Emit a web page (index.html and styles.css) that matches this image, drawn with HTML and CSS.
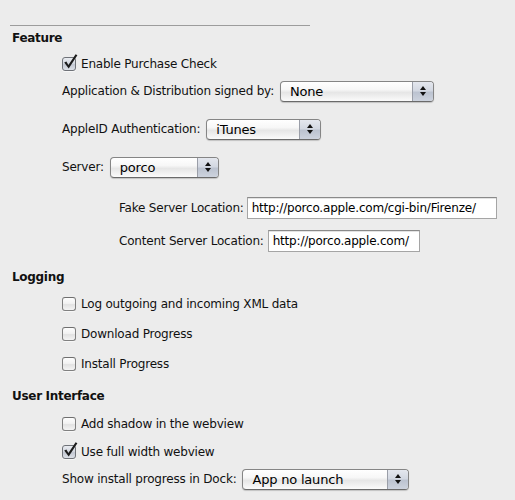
FILE: index.html
```html
<!DOCTYPE html>
<html>
<head>
<meta charset="utf-8">
<link rel="stylesheet" href="styles.css">
</head>
<body>
<div class="pane">
  <div class="rule"></div>

  <div class="row head r-feature">Feature</div>

  <div class="row ind r-enable">
    <span class="box on"><svg class="tick" viewBox="0 0 18 18" width="18" height="18"><path d="M3.2 9.6 L5.4 8.4 L7.4 12 L14.6 1.2 L16.4 2.2 L7.7 15.6 Z"/></svg></span>
    <span class="ctext">Enable Purchase Check</span>
  </div>

  <div class="row ind r-sign">
    <span class="lbl">Application &amp; Distribution signed by:</span>
    <span class="popup w-sign"><span class="ptext">None</span><span class="step"><i class="up"></i><i class="dn"></i></span></span>
  </div>

  <div class="row ind r-apple">
    <span class="lbl">AppleID Authentication:</span>
    <span class="popup w-apple"><span class="ptext">iTunes</span><span class="step"><i class="up"></i><i class="dn"></i></span></span>
  </div>

  <div class="row ind r-server">
    <span class="lbl">Server:</span>
    <span class="popup w-server"><span class="ptext">porco</span><span class="step"><i class="up"></i><i class="dn"></i></span></span>
  </div>

  <div class="row ind2 r-fake">
    <span class="lbl">Fake Server Location:</span>
    <span class="field w-fake">http://porco.apple.com/cgi-bin/Firenze/</span>
  </div>

  <div class="row ind2 r-content">
    <span class="lbl">Content Server Location:</span>
    <span class="field w-content">http://porco.apple.com/</span>
  </div>

  <div class="row head r-logging">Logging</div>

  <div class="row ind r-log">
    <span class="box"></span>
    <span class="ctext">Log outgoing and incoming XML data</span>
  </div>

  <div class="row ind r-dl">
    <span class="box"></span>
    <span class="ctext">Download Progress</span>
  </div>

  <div class="row ind r-inst">
    <span class="box"></span>
    <span class="ctext">Install Progress</span>
  </div>

  <div class="row head r-ui">User Interface</div>

  <div class="row ind r-shadow">
    <span class="box"></span>
    <span class="ctext">Add shadow in the webview</span>
  </div>

  <div class="row ind r-full">
    <span class="box on"><svg class="tick" viewBox="0 0 18 18" width="18" height="18"><path d="M3.2 9.6 L5.4 8.4 L7.4 12 L14.6 1.2 L16.4 2.2 L7.7 15.6 Z"/></svg></span>
    <span class="ctext">Use full width webview</span>
  </div>

  <div class="row ind r-dock">
    <span class="lbl">Show install progress in Dock:</span>
    <span class="popup w-dock"><span class="ptext">App no launch</span><span class="step"><i class="up"></i><i class="dn"></i></span></span>
  </div>
</div>
</body>
</html>
```

FILE: styles.css
```css
html, body {
  margin: 0;
  padding: 0;
  background: #ececec;
}
body {
  width: 515px;
  height: 500px;
  overflow: hidden;
  font-family: "DejaVu Sans", "Liberation Sans", sans-serif;
  font-size: 12px;
  letter-spacing: -0.2px;
  color: #111;
}
.pane {
  display: flex;
  flex-direction: column;
  padding-top: 25px;
}
.rule {
  margin-left: 10px;
  width: 300px;
  height: 1px;
  background: #9c9c9c;
}
.row {
  display: flex;
  align-items: center;
  height: 22px;
  white-space: nowrap;
}
.head {
  padding-left: 12px;
  font-weight: bold;
  letter-spacing: -0.3px;
}
.ind { padding-left: 62px; }
.ind2 { padding-left: 119px; }

.r-feature { margin-top: 1px; }
.r-enable { margin-top: 4px; }
.r-sign { margin-top: 5px; }
.r-apple { margin-top: 16px; }
.r-server { margin-top: 16px; }
.r-fake { margin-top: 19px; }
.r-content { margin-top: 11px; }
.r-logging { margin-top: 14px; }
.r-log { margin-top: 5px; }
.r-dl { margin-top: 8px; }
.r-inst { margin-top: 8px; }
.r-ui { margin-top: 10px; }
.r-shadow { margin-top: 6px; }
.r-full { margin-top: 6px; }
.r-dock { margin-top: 5px; }

/* checkbox */
.box {
  position: relative;
  flex: none;
  box-sizing: border-box;
  width: 14px;
  height: 14px;
  border: 1px solid #808080;
  border-top-color: #6e6e6e;
  border-radius: 3px;
  background: linear-gradient(#fdfdfd, #f2f2f2 45%, #e2e2e2 55%, #f4f4f4);
  box-shadow: 0 1px 0 rgba(255,255,255,0.6);
}
.box.on {
  background: linear-gradient(#e9ecf1, #d4d8e0 45%, #c3c8d2 55%, #dde1e8);
  border-color: #6f7278;
}
.tick {
  position: absolute;
  left: -2px;
  top: -5px;
  fill: #1b1b1b;
}
.ctext { margin-left: 5px; }

/* labels */
.lbl { margin-right: 6px; }
.ind2 .lbl { margin-right: 3px; }
.r-content .lbl { margin-right: 4px; }

/* popup buttons */
.popup {
  display: flex;
  flex: none;
  box-sizing: border-box;
  height: 21px;
  border: 1px solid #858585;
  border-bottom-color: #6a6a6a;
  border-radius: 4px;
  overflow: hidden;
  background: linear-gradient(#ffffff, #f7f7f7 40%, #e6e6e6 55%, #f1f1f1 80%, #fbfbfb);
  box-shadow: 0 1px 1px rgba(0,0,0,0.18);
  font-size: 13px;
  letter-spacing: -0.2px;
}
.ptext {
  flex: 1;
  padding-left: 9px;
  line-height: 19px;
  color: #000;
}
.step {
  flex: none;
  width: 20px;
  border-left: 1px solid #9a9ea8;
  background: linear-gradient(#e4e7ee, #d3d8e2 45%, #bcc3d0 55%, #cdd3de);
  display: flex;
  flex-direction: column;
  align-items: center;
  justify-content: center;
  gap: 2px;
}
.step i {
  display: block;
  width: 0;
  height: 0;
  border-left: 3px solid transparent;
  border-right: 3px solid transparent;
}
.step .up { border-bottom: 4px solid #111; }
.step .dn { border-top: 4px solid #111; }

.w-sign { width: 154px; }
.w-apple { width: 115px; }
.w-server { width: 109px; }
.w-dock { width: 167px; }

/* text fields */
.field {
  flex: none;
  box-sizing: border-box;
  height: 22px;
  padding-left: 4px;
  border: 1px solid #a5a5a5;
  border-top-color: #8a8a8a;
  background: #fff;
  line-height: 20px;
  color: #000;
  box-shadow: inset 0 1px 0 #e3e3e3;
}
.w-fake { width: 250px; }
.w-content { width: 152px; }
```
